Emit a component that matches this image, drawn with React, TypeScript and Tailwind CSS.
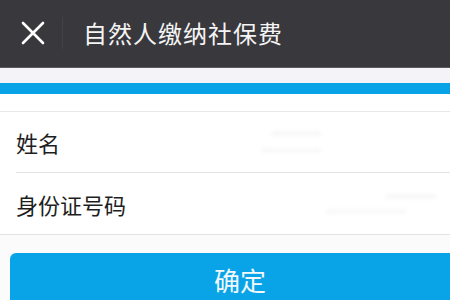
import React from "react";

const cjk = "font-['Noto_Sans_CJK_SC','Noto_Sans',sans-serif]";

function FormRow({ label, last, blur }: { label: string; last?: boolean; blur: React.ReactNode }) {
  return (
    <div className="flex h-[61px] items-center pl-4">
      <div className={`flex h-full flex-1 items-center ${last ? "" : "border-b border-[#e4e4e6]"}`}>
        <span className="w-[200px] text-[22px] leading-none text-[#1e1e1e]">{label}</span>
        {blur}
      </div>
    </div>
  );
}

export default function App() {
  return (
    <div className={`h-[300px] w-[450px] overflow-hidden bg-[#fbfbfb] ${cjk}`}>
      {/* top bar */}
      <div className="flex h-[67px] items-center bg-[#39383d] pb-[1px]">
        <div className="flex w-[62px] items-center justify-center pl-[4px]">
          <svg width="24" height="24" viewBox="0 0 24 24" className="text-white">
            <path d="M2 2 L22 22 M22 2 L2 22" stroke="currentColor" strokeWidth="2.6" strokeLinecap="round" fill="none" />
          </svg>
        </div>
        <div className="h-[32px] w-px bg-[#434247]" />
        <h1 className="ml-[20px] text-[24px] font-normal leading-none tracking-[1px] text-[#f4f4f4]">
          自然人缴纳社保费
        </h1>
      </div>

      <div className="h-[1px] bg-[#5a595e]" />
      <div className="h-[15px] bg-[#f3f3f8]" />
      <div className="h-[11px] bg-[#08a2e6] shadow-[0_1px_1px_#d6fbff]" />
      <div className="h-[18px] border-b border-[#e8e8ea] bg-white" />

      {/* form */}
      <div className="border-b border-[#e2e2e4] bg-white">
        <FormRow
          label="姓名"
          blur={
            <div className="ml-[45px] flex flex-col gap-[14px] opacity-70">
              <span className="ml-[10px] h-[3px] w-[50px] rounded-full bg-[#ededed] blur-[2px]" />
              <span className="h-[3px] w-[60px] rounded-full bg-[#efefef] blur-[2px]" />
            </div>
          }
        />
        <FormRow
          label="身份证号码"
          last
          blur={
            <div className="ml-[50px] flex flex-col gap-[12px] opacity-70">
              <span className="ml-[120px] h-[3px] w-[50px] rounded-full bg-[#ededed] blur-[2px]" />
              <span className="ml-[60px] h-[3px] w-[80px] rounded-full bg-[#efefef] blur-[2px]" />
            </div>
          }
        />
      </div>

      {/* confirm */}
      <div className="pl-[10px] pt-[18px]">
        <button className="flex h-[60px] w-[460px] items-start justify-center rounded-[6px] bg-[#09a4e8] pt-[14px] text-[26px] leading-none text-[#f2f8fc]">
          确定
        </button>
      </div>
    </div>
  );
}
